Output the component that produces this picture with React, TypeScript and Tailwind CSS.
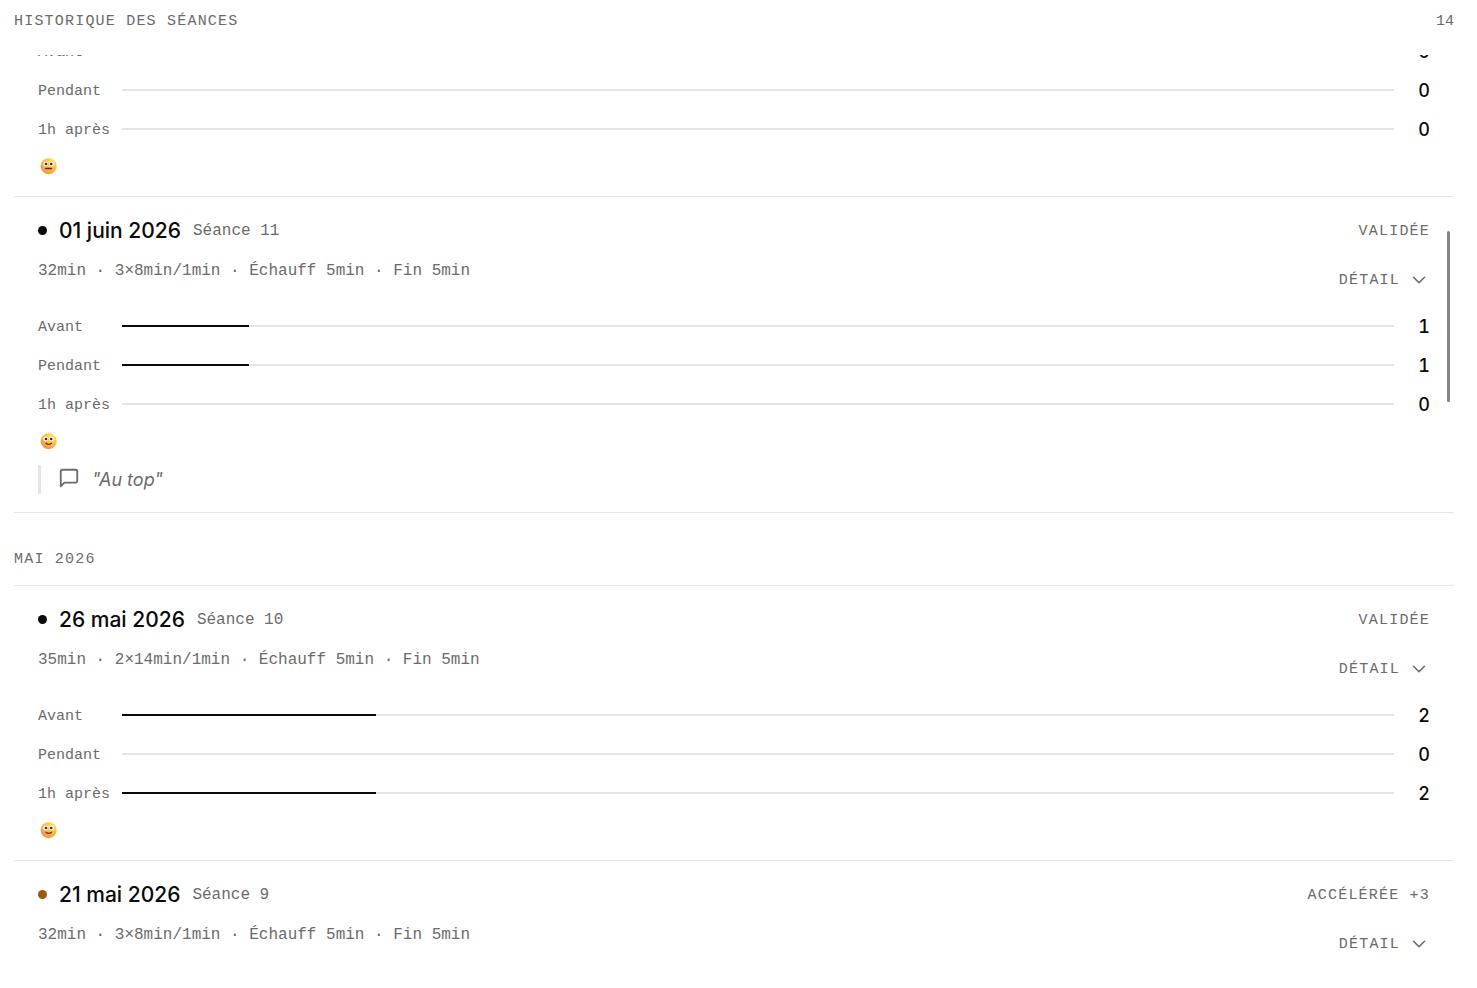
import React, { useLayoutEffect, useRef } from 'react'
import { ChevronDown } from 'lucide-react'

type Mood = 'neutral' | 'happy'

type Level = { label: string; value: number }

type Session = {
  id: string
  date?: string
  name?: string
  status?: string
  adjusted?: boolean
  summary?: string
  levels: Level[]
  mood?: Mood
  comment?: string
}

type Month = { id: string; title?: string; sessions: Session[] }

const levels = (avant: number, pendant: number, apres: number): Level[] => [
  { label: 'Avant', value: avant },
  { label: 'Pendant', value: pendant },
  { label: '1h après', value: apres },
]

const MONTHS: Month[] = [
  {
    id: 'juin',
    sessions: [
      { id: 's12', levels: levels(0, 0, 0), mood: 'neutral' },
      {
        id: 's11',
        date: '01 juin 2026',
        name: 'Séance 11',
        status: 'Validée',
        summary: '32min · 3×8min/1min · Échauff 5min · Fin 5min',
        levels: levels(1, 1, 0),
        mood: 'happy',
        comment: 'Au top',
      },
    ],
  },
  {
    id: 'mai',
    title: 'Mai 2026',
    sessions: [
      {
        id: 's10',
        date: '26 mai 2026',
        name: 'Séance 10',
        status: 'Validée',
        summary: '35min · 2×14min/1min · Échauff 5min · Fin 5min',
        levels: levels(2, 0, 2),
        mood: 'happy',
      },
      {
        id: 's9',
        date: '21 mai 2026',
        name: 'Séance 9',
        status: 'Accélérée +3',
        adjusted: true,
        summary: '32min · 3×8min/1min · Échauff 5min · Fin 5min',
        levels: [],
      },
    ],
  },
]

const MAX_LEVEL = 10

const MoodFace: React.FC<{ mood: Mood }> = ({ mood }) => (
  <svg
    viewBox="0 0 22 22"
    className="h-[22px] w-[22px]"
    role="img"
    aria-label={mood === 'happy' ? 'Content' : 'Neutre'}
  >
    <defs>
      <radialGradient id={`face-${mood}`} cx="0.72" cy="0.22" r="0.9">
        <stop offset="0" stopColor="#ffe45c" />
        <stop offset="0.55" stopColor="#fdb93a" />
        <stop offset="0.85" stopColor="#f99b3c" />
        <stop offset="1" stopColor="#ea6868" />
      </radialGradient>
    </defs>
    <circle cx="10.7" cy="11.2" r="8" fill={`url(#face-${mood})`} />
    <circle cx="7.6" cy="9" r="2.4" fill="#fff" />
    <circle cx="13.6" cy="9" r="2.4" fill="#fff" />
    <circle cx="8" cy="9" r="1.3" fill="#3b2340" />
    <circle cx="13.2" cy="9" r="1.3" fill="#3b2340" />
    <path
      d={mood === 'happy' ? 'M8 13.2q2.7 2.2 5.4 0' : 'M7.6 13.5h6'}
      fill="none"
      stroke="#5b2b3c"
      strokeWidth="1.3"
      strokeLinecap="round"
    />
  </svg>
)

const LevelRow: React.FC<{ level: Level }> = ({ level }) => (
  <div className="flex h-7 items-center gap-3">
    <span className="w-[72px] shrink-0 whitespace-nowrap pt-1 font-['Liberation_Mono',monospace] text-[15px] leading-6 text-[#6b6b6b]">
      {level.label}
    </span>
    <div className="h-0.5 flex-1 bg-[#e5e5e5]">
      <div
        className="h-full bg-[#0a0a0a]"
        style={{ width: `${(level.value / MAX_LEVEL) * 100}%` }}
      />
    </div>
    <span className="w-6 shrink-0 pt-0.5 text-right text-lg font-medium leading-7 tabular-nums">
      {level.value}
    </span>
  </div>
)

const SessionItem: React.FC<{ session: Session }> = ({ session }) => (
  <article
    className={`border-b border-[#e5e5e5] px-6 pb-[18px] ${session.date ? 'pt-5' : ''}`}
  >
    {session.date && (
      <>
        <div className="flex h-7 items-center justify-between">
          <div className="flex items-center gap-3">
            <span
              className={`mb-px h-[9px] w-[9px] shrink-0 rounded-full ${
                session.adjusted ? 'bg-[#9a5b0c]' : 'bg-[#0a0a0a]'
              }`}
            />
            <h3 className="text-[21px] font-medium leading-7">{session.date}</h3>
            <span className="font-['Liberation_Mono',monospace] text-base text-[#6b6b6b]">
              {session.name}
            </span>
          </div>
          <span className="pt-0.5 font-['Liberation_Mono',monospace] text-[15px] uppercase tracking-[0.08em] text-[#6b6b6b]">
            {session.status}
          </span>
        </div>
        <div className="mt-3.5 flex items-start justify-between">
          <p className="font-['Liberation_Mono',monospace] text-base leading-6 text-[#6b6b6b]">
            {session.summary}
          </p>
          <button
            type="button"
            className="flex h-[42px] items-center gap-2 font-['Liberation_Mono',monospace] text-[15px] uppercase tracking-[0.08em] text-[#6b6b6b]"
          >
            <span className="pt-0.5">Détail</span>
            <ChevronDown className="h-[22px] w-[22px]" strokeWidth={1.75} />
          </button>
        </div>
      </>
    )}

    {session.levels.length > 0 && (
      <div className={`space-y-[11px] ${session.date ? 'mt-[11px]' : ''}`}>
        {session.levels.map((level) => (
          <LevelRow key={level.label} level={level} />
        ))}
      </div>
    )}

    {session.mood && (
      <div className="mt-[11px] flex h-6 items-center">
        <MoodFace mood={session.mood} />
      </div>
    )}

    {session.comment && (
      <blockquote className="mt-3 flex items-start gap-3 border-l-[3px] border-[#e5e5e5] pl-[17px] text-[#6b6b6b]">
        <svg
          viewBox="0 0 24 24"
          className="mt-0.5 h-[22px] w-[22px] shrink-0"
          fill="none"
          stroke="currentColor"
          strokeWidth="2"
          strokeLinecap="round"
          strokeLinejoin="round"
          aria-hidden="true"
        >
          <path d="M21 15a2 2 0 0 1-2 2H7l-4 4V5a2 2 0 0 1 2-2h14a2 2 0 0 1 2 2z" />
        </svg>
        <p className="text-lg italic leading-[29px]">"{session.comment}"</p>
      </blockquote>
    )}
  </article>
)

export default function App() {
  const listRef = useRef<HTMLDivElement>(null)

  useLayoutEffect(() => {
    if (listRef.current) listRef.current.scrollTop = 18
  }, [])

  return (
    <main className="flex h-screen flex-col bg-white pb-3.5 pl-3.5 pr-[23px] pt-2.5 font-[Inter,'Liberation_Sans',sans-serif] text-[#0a0a0a]">
      <header className="flex items-center justify-between pb-[21px] font-['Liberation_Mono',monospace] text-[15px] leading-6 text-[#6b6b6b]">
        <h1 className="uppercase tracking-[0.08em]">Historique des séances</h1>
        <span>14</span>
      </header>

      <div className="relative flex min-h-0 flex-1 flex-col">
        <div
          ref={listRef}
          className="min-h-0 flex-1 overflow-y-auto [scrollbar-width:none]"
        >
          {MONTHS.map((month) => (
            <section key={month.id}>
              {month.title && (
                <h2 className="border-b border-[#e5e5e5] pb-[13px] pt-[35px] font-['Liberation_Mono',monospace] text-[15px] uppercase leading-6 tracking-[0.08em] text-[#6b6b6b]">
                  {month.title}
                </h2>
              )}
              {month.sessions.map((session) => (
                <SessionItem key={session.id} session={session} />
              ))}
            </section>
          ))}
        </div>
        {/* scroll thumb */}
        <div className="absolute right-1 top-44 h-[171px] w-[3px] rounded-full bg-[#858585]" />
      </div>
    </main>
  )
}
